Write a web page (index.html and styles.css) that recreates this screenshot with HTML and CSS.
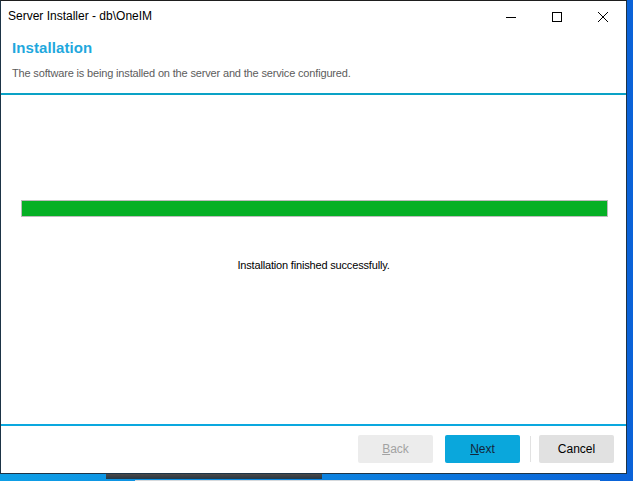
FILE: index.html
```html
<!DOCTYPE html>
<html>
<head>
<meta charset="utf-8">
<title>Server Installer</title>
<link rel="stylesheet" href="styles.css">
</head>
<body>
<div class="screen">
  <div class="window">
    <div class="titlebar">
      <div class="title">Server Installer - db\OneIM</div>
      <div class="controls">
        <div class="ctl">
          <svg width="10" height="10" viewBox="0 0 10 10"><path d="M0 5.5H10" stroke="#000" stroke-width="1"/></svg>
        </div>
        <div class="ctl">
          <svg width="10" height="10" viewBox="0 0 10 10"><rect x="0.5" y="0.5" width="9" height="9" fill="none" stroke="#000" stroke-width="1"/></svg>
        </div>
        <div class="ctl">
          <svg width="10" height="10" viewBox="0 0 10 10"><path d="M0 0L10 10M10 0L0 10" stroke="#000" stroke-width="1"/></svg>
        </div>
      </div>
    </div>
    <div class="header">
      <div class="heading">Installation</div>
      <div class="subheading">The software is being installed on the server and the service configured.</div>
    </div>
    <div class="content">
      <div class="progress"><div class="progress-fill"></div></div>
      <div class="status">Installation finished successfully.</div>
    </div>
    <div class="footer">
      <button class="btn btn-disabled"><u>B</u>ack</button>
      <button class="btn btn-primary"><u>N</u>ext</button>
      <div class="sep"></div>
      <button class="btn btn-default">Cancel</button>
    </div>
  </div>
  <div class="desktop">
    <div class="behind-bar"></div>
    <div class="behind-line"></div>
  </div>
</div>
</body>
</html>
```

FILE: styles.css
```css
html, body {
  margin: 0;
  padding: 0;
}
body {
  width: 633px;
  height: 481px;
  overflow: hidden;
  font-family: "Liberation Sans", Arial, sans-serif;
}
.screen {
  width: 633px;
  height: 481px;
  background: linear-gradient(to right, #0e9fe6 0%, #0c86e0 45%, #0a62d8 100%);
  display: flex;
  flex-direction: column;
}
.window {
  width: 625px;
  height: 472px;
  background: #fff;
  border-top: 1px solid #1e1e1e;
  border-left: 1px solid #1d3446;
  border-right: 1px solid #1d3446;
  border-bottom: 1px solid #1d3446;
  display: flex;
  flex-direction: column;
}
.titlebar {
  height: 31px;
  display: flex;
  align-items: center;
  justify-content: space-between;
  flex: none;
}
.title {
  padding-left: 7px;
  font-size: 12px;
  color: #000;
  padding-bottom: 1px;
}
.controls {
  display: flex;
  height: 31px;
}
.ctl {
  width: 46px;
  height: 31px;
  display: flex;
  align-items: center;
  justify-content: center;
}
.header {
  height: 61px;
  border-bottom: 2px solid #0aa2c6;
  padding-left: 11px;
  flex: none;
}
.heading {
  margin-top: 7px;
  font-size: 15px;
  font-weight: bold;
  color: #1fa8dd;
  line-height: 18px;
  letter-spacing: 0.1px;
}
.subheading {
  margin-top: 10px;
  font-size: 11px;
  color: #5c5c5c;
  line-height: 13px;
  letter-spacing: -0.16px;
}
.content {
  flex: 1;
  padding: 105px 18px 0 20px;
  display: flex;
  flex-direction: column;
}
.progress {
  height: 15px;
  border: 1px solid #bcbcbc;
  background: #e6e6e6;
}
.progress-fill {
  height: 100%;
  width: 100%;
  background: #06b025;
}
.status {
  margin-top: 42px;
  text-align: center;
  font-size: 11px;
  color: #000;
  line-height: 13px;
  letter-spacing: -0.17px;
  padding-right: 2px;
}
.footer {
  flex: none;
  height: 49px;
  border-top: 2px solid #0aa8df;
  display: flex;
  justify-content: flex-end;
  align-items: flex-start;
  padding: 9px 12px 0 0;
  box-sizing: border-box;
}
.btn {
  width: 75px;
  height: 28px;
  border: none;
  border-radius: 2px;
  font-family: "Liberation Sans", Arial, sans-serif;
  font-size: 12px;
  padding: 0;
  margin-left: 12px;
}
.btn-disabled {
  background: #ececec;
  color: #a2a2a2;
}
.btn-primary {
  background: #0aa7dc;
  color: #13263a;
}
.btn-default {
  background: #e1e1e1;
  color: #000;
  margin-left: 8px;
}
.sep {
  width: 1px;
  height: 26px;
  margin-top: 1px;
  background: #e2e2e2;
  margin-left: 10px;
}
.desktop {
  flex: 1;
  display: flex;
  flex-direction: column;
}
.behind-bar {
  margin-left: 106px;
  width: 216px;
  height: 5px;
  background: linear-gradient(to bottom, #4a4a4a 0%, #3a3f44 50%, #1d3a4c 100%);
}
.behind-line {
  margin-top: auto;
  margin-left: 135px;
  width: 465px;
  height: 1px;
  background: #d6d9dc;
}
```
